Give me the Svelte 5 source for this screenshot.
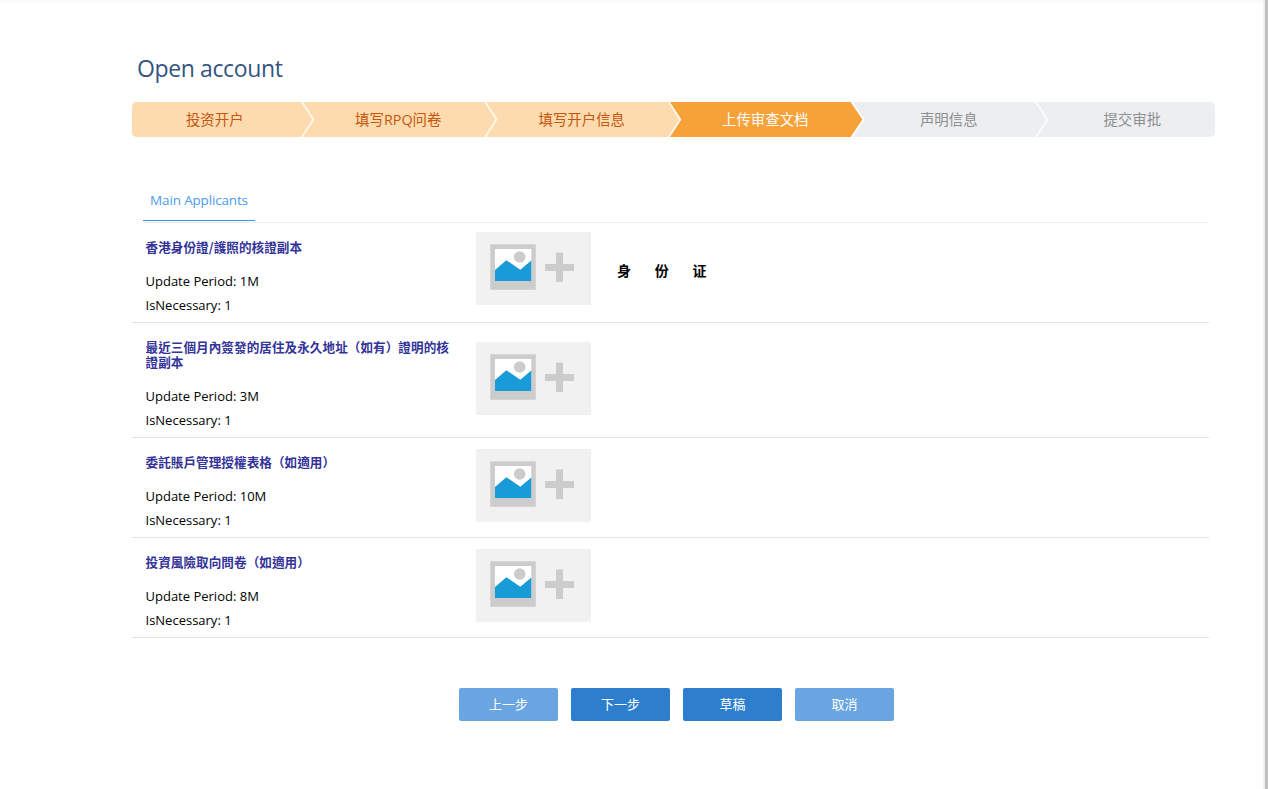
<script>
  const steps = [
    { label: '投资开户', state: 'done' },
    { label: '填写RPQ问卷', state: 'done' },
    { label: '填写开户信息', state: 'done' },
    { label: '上传审查文档', state: 'current' },
    { label: '声明信息', state: 'todo' },
    { label: '提交审批', state: 'todo' }
  ];
  const separators = [169.3, 352.6, 536.3, 719.5, 903.3];
  const documents = [
    { title: '香港身份證/護照的核證副本', period: '1M', necessary: 1, note: '身份证', size: 'first' },
    { title: '最近三個月內簽發的居住及永久地址（如有）證明的核證副本', period: '3M', necessary: 1, size: 'tall' },
    { title: '委託賬戶管理授權表格（如適用）', period: '10M', necessary: 1, size: '' },
    { title: '投資風險取向問卷（如適用）', period: '8M', necessary: 1, size: '' }
  ];
  const actions = [
    { label: '上一步', tone: 'light' },
    { label: '下一步', tone: 'strong' },
    { label: '草稿', tone: 'strong' },
    { label: '取消', tone: 'light' }
  ];
</script>

<div class="page">
  <main>
    <h1>Open account</h1>

    <div class="steps">
      <svg class="track" width="1083" height="35" viewBox="0 0 1083 35">
        <rect width="1083" height="35" fill="#edeef0" />
        <path d="M0 0H718L729 17.5 718 35H0Z" fill="#fddbae" />
        <path d="M537.5 0H718.5L730.5 17.5 718.5 35H537.5L549.3 17.5Z" fill="#f7a139" />
        {#each separators as x}
          <path d="M{x} -1L{x + 12} 17.5 {x} 36" fill="none" stroke="#fff" stroke-width="1.8" stroke-opacity=".8" />
        {/each}
      </svg>
      <ol>
        {#each steps as step}
          <li class={step.state}>{step.label}</li>
        {/each}
      </ol>
    </div>

    <nav><button class="tab">Main Applicants</button></nav>

    <section>
      {#each documents as doc}
        <article class={doc.size}>
          <div class="info">
            <h2>{doc.title}</h2>
            <p class="period">Update Period: {doc.period}</p>
            <p class="need">IsNecessary: {doc.necessary}</p>
          </div>
          <div class="upload">
            <svg width="115" height="73" viewBox="0 0 115 73">
              <rect width="115" height="73" fill="#f1f1f1" />
              <rect x="14.3" y="12.3" width="45.5" height="45.5" fill="#ccc" />
              <rect x="19" y="17" width="36.3" height="32" fill="#fff" />
              <circle cx="43.7" cy="25" r="5.8" fill="#ccc" />
              <path d="M19 38L30.3 28.2 44.3 37.7 55.3 28.5V49H19Z" fill="#199bd7" />
              <path d="M80 20.5H87V32H98V39H87V50H80V39H69V32H80Z" fill="#ccc" />
            </svg>
          </div>
          {#if doc.note}<strong>{doc.note}</strong>{/if}
        </article>
      {/each}
    </section>

    <footer>
      {#each actions as action}
        <button class="action {action.tone}">{action.label}</button>
      {/each}
    </footer>
  </main>
  <div class="scroll"></div>
</div>

<style>
  :global(body) { background: #fff; overflow: hidden; }
  .page {
    display: flex;
    justify-content: space-between;
    box-sizing: border-box;
    height: 789px;
    padding-left: 132px;
    background: linear-gradient(#f7f7f7, #fff 4px);
    font-family: "Open Sans", "Noto Sans CJK SC", sans-serif;
    color: #000;
  }
  main { width: 1083px; }
  .scroll {
    box-sizing: border-box;
    width: 5px;
    border-left: 1px solid #f2f2f2;
    border-right: 3px solid #c1c1c1;
    background: #eee;
  }
  h1 {
    margin: 50px 0 16px 5px;
    height: 36px;
    font-size: 23px;
    font-weight: 400;
    line-height: 36px;
    letter-spacing: -0.38px;
    color: #34557f;
    white-space: nowrap;
  }
  .steps { position: relative; height: 35px; border-radius: 5px; overflow: hidden; }
  .track { position: absolute; left: 0; top: 0; }
  ol {
    position: relative;
    display: grid;
    grid-template-columns: repeat(6, 1fr);
    margin: 0 -9px;
    padding: 0;
    list-style: none;
    font-size: 14.4px;
    line-height: 35px;
    text-align: center;
  }
  .done { color: #c4560f; }
  .current { color: #fff; }
  .todo { color: #8d8f92; }
  nav {
    display: flex;
    height: 85px;
    width: 1066px;
    margin-left: 11px;
    align-items: flex-end;
    border-bottom: 1px solid #eee;
  }
  button { border: 0; padding: 0; font-family: inherit; }
  .tab {
    width: 112px;
    height: 41px;
    margin-bottom: 1px;
    padding-bottom: 1px;
    border-bottom: 1px solid #2d94f0;
    background: none;
    font-size: 13.5px;
    letter-spacing: -0.16px;
    color: #4d9bed;
    white-space: nowrap;
  }
  section { width: 1077px; }
  article {
    display: flex;
    box-sizing: border-box;
    height: 100px;
    border-bottom: 1px solid #e1e1e1;
  }
  .tall { height: 115px; }
  .info { width: 330.5px; padding: 16px 0 0 13.5px; }
  h2 {
    width: 307px;
    margin: 0;
    font: 700 12.6px/15px "Noto Sans CJK TC", "Noto Sans CJK SC", sans-serif;
    letter-spacing: 0.05px;
    color: #333399;
  }
  p { margin: 0; font-size: 13px; line-height: 24px; white-space: nowrap; }
  .period { margin-top: 15px; }
  .upload { padding-top: 11px; }
  .first .upload { padding-top: 9px; }
  .tall .upload { padding-top: 19px; }
  svg { display: block; }
  strong {
    padding: 35px 0 0 26px;
    font: 700 14px/24px "Noto Sans CJK SC", sans-serif;
    letter-spacing: 23.7px;
    color: #000;
  }
  footer { display: flex; gap: 13px; margin: 50px 0 0 327px; }
  .action { width: 99px; height: 33px; padding-bottom: 2px; border-radius: 2px; font-size: 13px; color: #fff; }
  .light { background: #68a5e1; }
  .strong { background: #2d7fce; }
</style>
